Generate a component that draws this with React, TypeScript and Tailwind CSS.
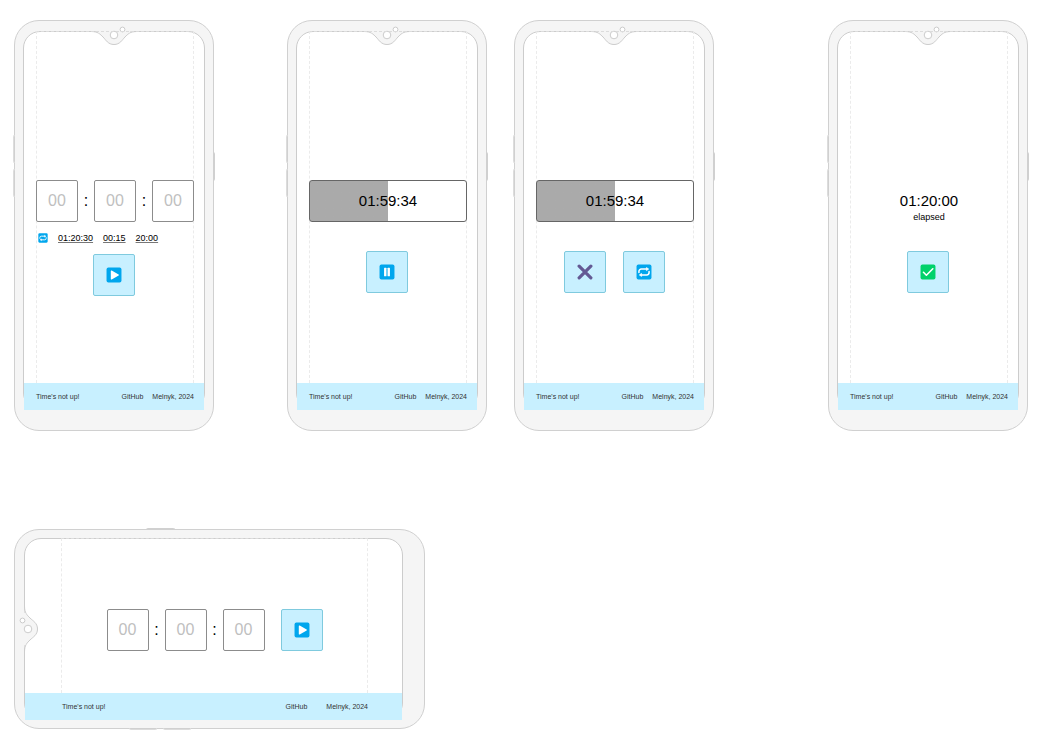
import { Fragment, type ReactNode } from "react";

const Tile = ({ color = "#00a6ed" }: { color?: string }) => (
  <rect x="2" y="2" width="28" height="28" rx="3.500" fill={color} />
);

function PlayIcon() {
  return (
    <svg className="size-4" viewBox="1 1 30 30" aria-hidden="true">
      <Tile />
      <path d="M10 8.500c0-.9.9-1.400 1.700-1l13 7.500c.8.5.8 1.500 0 2l-13 7.500c-.8.4-1.700-.1-1.700-1z" fill="#fff" />
    </svg>
  );
}

function PauseIcon() {
  return (
    <svg className="size-4" viewBox="1 1 30 30" aria-hidden="true">
      <Tile />
      <rect x="10.500" y="8" width="4.500" height="16" rx="1" fill="#fff" />
      <rect x="17" y="8" width="4.500" height="16" rx="1" fill="#fff" />
    </svg>
  );
}

function RepeatIcon({ className = "size-4" }: { className?: string }) {
  return (
    <svg className={className} viewBox="1 1 30 30" aria-hidden="true">
      <Tile />
      <path
        d="M6.500 17v-2a4.500 4.500 0 0 1 4.500-4.500H21M25.500 15v2a4.500 4.500 0 0 1-4.500 4.500H11"
        fill="none"
        stroke="#fff"
        strokeWidth="2.800"
        strokeLinecap="round"
      />
      <path d="M20.500 7.500 25 10.500l-4.500 3zM11.500 18.500 7 21.500l4.500 3z" fill="#fff" stroke="#fff" strokeLinejoin="round" />
    </svg>
  );
}

function CrossIcon() {
  return (
    <svg className="size-4" viewBox="1 1 30 30" aria-hidden="true">
      <path d="M5 5 27 27M27 5 5 27" stroke="#635994" strokeWidth="6" strokeLinecap="round" />
    </svg>
  );
}

function CheckIcon() {
  return (
    <svg className="size-4" viewBox="1 1 30 30" aria-hidden="true">
      <Tile color="#00d26a" />
      <path
        d="M7.500 16.500l5.500 5.500L25 10"
        fill="none"
        stroke="#fff"
        strokeWidth="3"
        strokeLinecap="round"
        strokeLinejoin="round"
      />
    </svg>
  );
}

function CameraDrawing() {
  return (
    <>
      <path
        d="M0 6.500H1C8 6.500 10 9 13 12C16 15 18 19.500 24 19.500C30 19.500 32 15 35 12C38 9 40 6.500 47 6.500H48"
        fill="#f5f5f5"
        stroke="#cccccc"
      />
      <path d="M8 5.500H40V7.500H8z" fill="#f5f5f5" />
      <circle cx="24" cy="10" r="3.800" fill="#fff" stroke="#cccccc" />
      <circle cx="32.500" cy="4.500" r="2.400" fill="#fff" stroke="#cccccc" />
    </>
  );
}

function Footer({ wide = false }: { wide?: boolean }) {
  return (
    <footer
      className={`relative -mb-px flex h-[27px] shrink-0 items-center bg-[#c8f0ff] text-[7px] leading-[10px] text-[#333333] ${
        wide ? "pr-[34px] pl-[37px]" : "pr-[10px] pl-3"
      }`}
    >
      <span className="grow">Time&apos;s not up!</span>
      <nav className={wide ? "flex gap-[19px]" : "flex gap-[9px]"}>
        <a href="#github">GitHub</a>
        <a href="#author">Melnyk, 2024</a>
      </nav>
    </footer>
  );
}

function Phone({ label, wide = false, children }: { label: string; wide?: boolean; children: ReactNode }) {
  return (
    <section
      aria-label={label}
      className={`relative flex shrink-0 rounded-[25px] border border-[#d0d0d0] bg-[#f5f5f5] ${
        wide ? "h-[200px] w-[411px] py-2 pr-[21px] pl-[9px]" : "h-[411px] w-[200px] px-2 pt-[10px] pb-5"
      }`}
    >
      {wide ? (
        <>
          <span className="absolute -top-[2px] left-[131px] h-[2px] w-[29px] rounded-t-sm border border-b-0 border-[#d0d0d0]" />
          <span className="absolute -bottom-[2px] left-[114px] h-[2px] w-[28px] rounded-b-sm border border-t-0 border-[#dcdcdc]" />
          <span className="absolute -bottom-[2px] left-[148px] h-[2px] w-[28px] rounded-b-sm border border-t-0 border-[#dcdcdc]" />
        </>
      ) : (
        <>
          <span className="absolute top-[114px] -left-[2px] h-[28px] w-[2px] rounded-l-sm border border-r-0 border-[#dcdcdc]" />
          <span className="absolute top-[148px] -left-[2px] h-[28px] w-[2px] rounded-l-sm border border-r-0 border-[#dcdcdc]" />
          <span className="absolute top-[131px] -right-[2px] h-[29px] w-[2px] rounded-r-sm border border-l-0 border-[#d0d0d0]" />
        </>
      )}
      <div className="flex min-w-0 grow flex-col rounded-[17px] border border-[#cccccc] bg-white">
        {wide ? (
          <svg className="absolute top-[75px] left-[3px] h-[48px] w-[22px]" viewBox="0 0 22 48" aria-hidden="true">
            <g transform="translate(0 48) rotate(-90)">
              <CameraDrawing />
            </g>
          </svg>
        ) : (
          <svg className="absolute top-[4px] left-[75px] h-[22px] w-[48px]" viewBox="0 0 48 22" aria-hidden="true">
            <CameraDrawing />
          </svg>
        )}
        <div
          className={`relative -mt-px grow border border-b-0 border-dashed border-[#ebebeb] border-t-[#dcdcdc] ${
            wide ? "mr-[34px] ml-[36px] pt-[70px]" : "mr-[10px] ml-3 pt-[148px]"
          }`}
        >
          <div className="-mx-px">{children}</div>
        </div>
        <Footer wide={wide} />
      </div>
    </section>
  );
}

function TimeFields() {
  return (
    <div className="flex items-center">
      {["Hours", "Minutes", "Seconds"].map((unit, index) => (
        <Fragment key={unit}>
          {index > 0 && <span className="w-4 grow text-center text-base leading-5 text-black">:</span>}
          <input
            aria-label={unit}
            placeholder="00"
            inputMode="numeric"
            className="size-[42px] rounded-xs border border-[#8c8c8c] bg-white text-center text-base text-black placeholder:text-[#bfbfbf]"
          />
        </Fragment>
      ))}
    </div>
  );
}

function ActionButton({ label, children }: { label: string; children: ReactNode }) {
  return (
    <button
      type="button"
      aria-label={label}
      className="flex size-[42px] shrink-0 items-center justify-center rounded-xs border border-[#7fcade] bg-[#c8f0ff]"
    >
      {children}
    </button>
  );
}

function ActionRow({ children }: { children: ReactNode }) {
  return <div className="flex justify-center gap-[17px] pr-[2px]">{children}</div>;
}

function CountdownBar() {
  return (
    <div
      role="progressbar"
      aria-label="Time left"
      aria-valuenow={50}
      className="relative mb-[29px] flex h-[42px] items-center justify-center overflow-hidden rounded-[3px] border border-[#666666] bg-linear-to-r from-[#aaaaaa] from-50% to-white to-50% text-[15px] leading-5 text-black"
    >
      01:59:34
    </div>
  );
}

export default function App() {
  return (
    <main className="min-h-screen bg-white px-[14px] pt-5 pb-6 font-['Liberation_Sans',Arial,sans-serif]">
      <div className="flex flex-wrap gap-y-8">
        <div className="mr-[73px]">
          <Phone label="Set timer">
            <TimeFields />
            <div className="flex h-8 items-center gap-[10px] pl-[2px] text-[9px] leading-3 text-black">
              <RepeatIcon className="size-[10px]" />
              {["01:20:30", "00:15", "20:00"].map((time) => (
                <button key={time} type="button" className="underline decoration-[#777777]">
                  {time}
                </button>
              ))}
            </div>
            <ActionRow>
              <ActionButton label="Start">
                <PlayIcon />
              </ActionButton>
            </ActionRow>
          </Phone>
        </div>
        <div className="mr-[114px] flex gap-[27px]">
          <Phone label="Timer running">
            <CountdownBar />
            <ActionRow>
              <ActionButton label="Pause">
                <PauseIcon />
              </ActionButton>
            </ActionRow>
          </Phone>
          <Phone label="Timer paused">
            <CountdownBar />
            <ActionRow>
              <ActionButton label="Cancel">
                <CrossIcon />
              </ActionButton>
              <ActionButton label="Restart">
                <RepeatIcon />
              </ActionButton>
            </ActionRow>
          </Phone>
        </div>
        <Phone label="Timer finished">
          <div className="mb-[29px] h-[42px] pt-[10px] text-center text-black">
            <p className="text-[15px] leading-[22px]">01:20:00</p>
            <p className="text-[9px] leading-[10px]">elapsed</p>
          </div>
          <ActionRow>
            <ActionButton label="Done">
              <CheckIcon />
            </ActionButton>
          </ActionRow>
        </Phone>
      </div>
      <div className="mt-[98px] flex">
        <Phone label="Set timer, landscape" wide>
          <div className="flex justify-center gap-4">
            <TimeFields />
            <ActionButton label="Start">
              <PlayIcon />
            </ActionButton>
          </div>
        </Phone>
      </div>
    </main>
  );
}
